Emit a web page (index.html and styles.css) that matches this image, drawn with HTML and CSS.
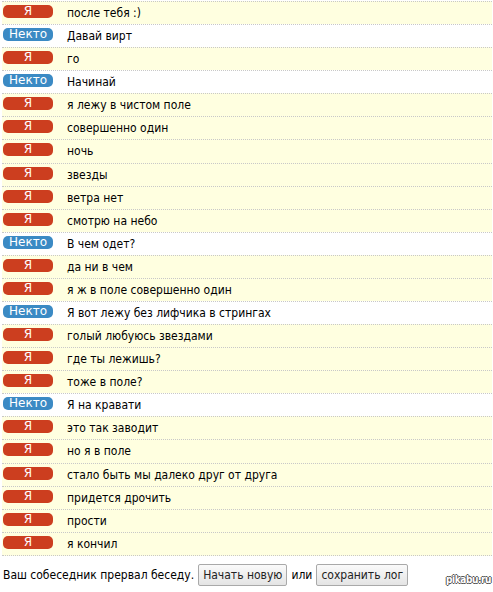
FILE: index.html
```html
<!DOCTYPE html>
<html>
<head>
<meta charset="utf-8">
<link rel="stylesheet" href="styles.css">
</head>
<body>
<div class="log">
  <div class="row me"><span class="badge red">Я</span><span class="msg">после тебя :)</span></div>
  <div class="row them"><span class="badge blue">Некто</span><span class="msg">Давай вирт</span></div>
  <div class="row me"><span class="badge red">Я</span><span class="msg">го</span></div>
  <div class="row them"><span class="badge blue">Некто</span><span class="msg">Начинай</span></div>
  <div class="row me"><span class="badge red">Я</span><span class="msg">я лежу в чистом поле</span></div>
  <div class="row me"><span class="badge red">Я</span><span class="msg">совершенно один</span></div>
  <div class="row me"><span class="badge red">Я</span><span class="msg">ночь</span></div>
  <div class="row me"><span class="badge red">Я</span><span class="msg">звезды</span></div>
  <div class="row me"><span class="badge red">Я</span><span class="msg">ветра нет</span></div>
  <div class="row me"><span class="badge red">Я</span><span class="msg">смотрю на небо</span></div>
  <div class="row them"><span class="badge blue">Некто</span><span class="msg">В чем одет?</span></div>
  <div class="row me"><span class="badge red">Я</span><span class="msg">да ни в чем</span></div>
  <div class="row me"><span class="badge red">Я</span><span class="msg">я ж в поле совершенно один</span></div>
  <div class="row them"><span class="badge blue">Некто</span><span class="msg">Я вот лежу без лифчика в стрингах</span></div>
  <div class="row me"><span class="badge red">Я</span><span class="msg">голый любуюсь звездами</span></div>
  <div class="row me"><span class="badge red">Я</span><span class="msg">где ты лежишь?</span></div>
  <div class="row me"><span class="badge red">Я</span><span class="msg">тоже в поле?</span></div>
  <div class="row them"><span class="badge blue">Некто</span><span class="msg">Я на кравати</span></div>
  <div class="row me"><span class="badge red">Я</span><span class="msg">это так заводит</span></div>
  <div class="row me"><span class="badge red">Я</span><span class="msg">но я в поле</span></div>
  <div class="row me"><span class="badge red">Я</span><span class="msg">стало быть мы далеко друг от друга</span></div>
  <div class="row me"><span class="badge red">Я</span><span class="msg">придется дрочить</span></div>
  <div class="row me"><span class="badge red">Я</span><span class="msg">прости</span></div>
  <div class="row me last"><span class="badge red">Я</span><span class="msg">я кончил</span></div>
</div>
<div class="status">
  <span>Ваш собеседник прервал беседу.</span>
  <button class="btn">Начать новую</button>
  <span>или</span>
  <button class="btn">сохранить лог</button>
</div>
<div class="watermark">pikabu.ru</div>
</body>
</html>
```
FILE: styles.css
```css
html, body {
  margin: 0;
  padding: 0;
  background: #fff;
}
body {
  font-family: "DejaVu Sans Condensed", "DejaVu Sans", Tahoma, sans-serif;
  font-size: 12px;
  color: #000;
  width: 493px;
  height: 592px;
  position: relative;
  overflow: hidden;
}
.log {
  margin: 1px 1px 0 2px;
}
.row {
  display: flex;
  align-items: flex-start;
  height: 22.08px;
  border-top: 1px dotted #c8c8c8;
}
.row.last {
  border-bottom: 1px dotted #c8c8c8;
}
.row.me {
  background: #ffffe0;
}
.row.them {
  background: #fff;
}
.badge {
  flex: none;
  width: 50px;
  height: 13px;
  margin: 3px 0 0 1px;
  border-radius: 5px;
  color: #fff;
  text-align: center;
  font-family: "DejaVu Sans", sans-serif;
  font-size: 12px;
  line-height: 13px;
}
.badge.red {
  background: #cc3e1f;
}
.badge.blue {
  background: #3b8ac4;
}
.msg {
  margin-left: 14px;
  line-height: 19px;
  padding-top: 2px;
}
.status {
  display: flex;
  align-items: center;
  gap: 4px;
  margin: 8px 0 0 3px;
}
.btn {
  font-family: inherit;
  font-size: 12px;
  color: #222;
  height: 22px;
  padding: 0 4px;
  border: 1px solid #a9a9a9;
  border-radius: 2px;
  background: linear-gradient(#fafafa, #e4e4e4);
}
.watermark {
  position: absolute;
  right: 2px;
  bottom: 7px;
  font-family: "DejaVu Sans Condensed", "DejaVu Sans", sans-serif;
  font-weight: bold;
  font-size: 10px;
  color: #fff;
  letter-spacing: -0.4px;
  text-shadow: 1px 0 0 #555, -1px 0 0 #555, 0 1px 0 #555, 0 -1px 0 #555;
}
```
